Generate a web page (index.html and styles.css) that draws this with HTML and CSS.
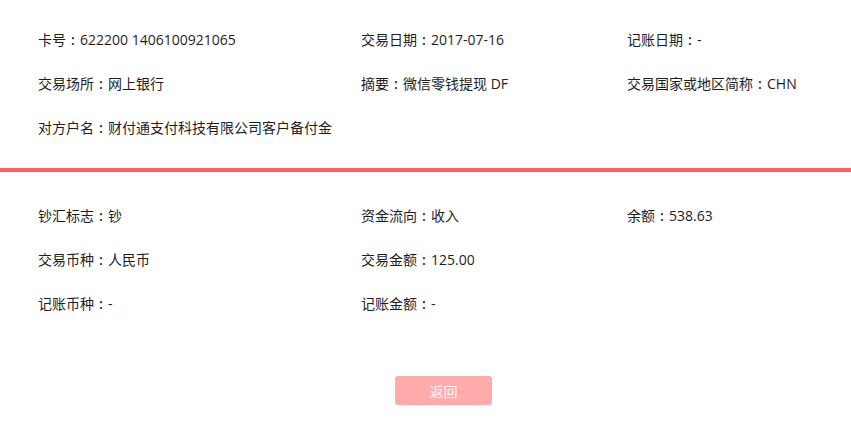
FILE: index.html
```html
<!DOCTYPE html>
<html lang="zh-CN">
<head>
<meta charset="utf-8">
<link rel="stylesheet" href="styles.css">
</head>
<body>
<div class="page">
  <section class="info info-top">
    <div class="item">卡号<span class="colon">:</span>622200 1406100921065</div>
    <div class="item">交易日期<span class="colon">:</span>2017-07-16</div>
    <div class="item">记账日期<span class="colon">:</span>-</div>
    <div class="item">交易场所<span class="colon">:</span>网上银行</div>
    <div class="item">摘要<span class="colon">:</span>微信零钱提现 DF</div>
    <div class="item">交易国家或地区简称<span class="colon">:</span>CHN</div>
    <div class="item">对方户名<span class="colon">:</span>财付通支付科技有限公司客户备付金</div>
  </section>
  <div class="divider"></div>
  <section class="info info-bottom">
    <div class="item">钞汇标志<span class="colon">:</span>钞</div>
    <div class="item">资金流向<span class="colon">:</span>收入</div>
    <div class="item">余额<span class="colon">:</span>538.63</div>
    <div class="item">交易币种<span class="colon">:</span>人民币</div>
    <div class="item">交易金额<span class="colon">:</span>125.00</div>
    <div class="item"></div>
    <div class="item">记账币种<span class="colon">:</span>-</div>
    <div class="item">记账金额<span class="colon">:</span>-</div>
  </section>
  <div class="actions">
    <button class="btn-back">返回</button>
  </div>
</div>
</body>
</html>
```

FILE: styles.css
```css
html, body {
  margin: 0;
  padding: 0;
  background: #ffffff;
}
body {
  font-family: "Open Sans", "Noto Sans CJK SC", sans-serif;
  font-size: 14px;
  color: #1e1e1e;
}
.page {
  width: 851px;
}
.info {
  display: grid;
  grid-template-columns: 323px 266px 1fr;
  padding-left: 38px;
}
.item {
  height: 44px;
  line-height: 44px;
  white-space: nowrap;
}
.colon {
  display: inline-block;
  width: 14px;
  text-align: center;
  font-weight: 600;
}
.info-top {
  padding-top: 18px;
  padding-bottom: 18px;
}
.divider {
  height: 4px;
  background: #ff5e62;
}
.info-bottom {
  padding-top: 22px;
}
.actions {
  display: flex;
  justify-content: center;
  padding-top: 50px;
  padding-left: 36px;
}
.btn-back {
  width: 97px;
  height: 29px;
  border: none;
  border-radius: 3px;
  background: #ffaaab;
  color: #ffffff;
  font-family: "Noto Sans CJK SC", sans-serif;
  font-size: 14px;
  padding: 0;
  cursor: pointer;
}
```
